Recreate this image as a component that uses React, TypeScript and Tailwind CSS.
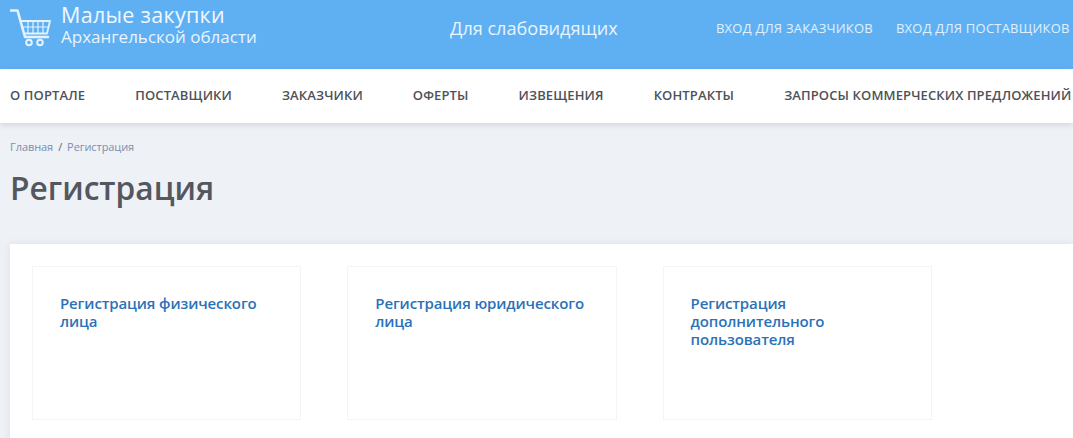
const navItems = [
	"О ПОРТАЛЕ",
	"ПОСТАВЩИКИ",
	"ЗАКАЗЧИКИ",
	"ОФЕРТЫ",
	"ИЗВЕЩЕНИЯ",
	"КОНТРАКТЫ",
	"ЗАПРОСЫ КОММЕРЧЕСКИХ ПРЕДЛОЖЕНИЙ",
];

const cards = [
	"Регистрация физического лица",
	"Регистрация юридического лица",
	"Регистрация дополнительного пользователя",
];

function CartIcon() {
	return (
		<svg width="41" height="38" viewBox="0 0 41 38" fill="none" stroke="#e4f2fe" className="mt-[5px] shrink-0">
			<path d="M1 1.5 H7.5 L15 28 H38" strokeWidth="2.6" strokeLinecap="round" strokeLinejoin="round" />
			<path d="M10.5 12 H40 L37 24.5 H14" strokeWidth="1.8" strokeLinejoin="round" />
			<path d="M18 12 V24 M23 12 V24 M28 12 V24 M33 12 V24 M12 18 H39" strokeWidth="1.2" />
			<circle cx="19" cy="33.5" r="2.8" strokeWidth="2" />
			<circle cx="30" cy="33.5" r="2.8" strokeWidth="2" />
		</svg>
	);
}

export default function App() {
	return (
		<div className="h-[438px] w-[1073px] overflow-hidden bg-[#eef1f6] font-['Open_Sans','Noto_Sans',sans-serif]">
			<header className="flex h-[69px] items-center bg-[#5fb0f3] text-white">
				<div className="flex w-[420px] items-start self-start pl-[10px] pt-[4px]">
					<CartIcon />
					<div className="ml-[10px]">
						<div className="text-[21.5px] leading-[22px] tracking-[0.3px] text-[#f0f8ff]">Малые закупки</div>
						<div className="text-[17px] leading-[22px] text-[#e8f4fe]">Архангельской области</div>
					</div>
				</div>
				<div className="ml-[30px] w-[266px] pb-[12px] text-[18.1px] text-[#e8f4fe]">Для слабовидящих</div>
				<div className="whitespace-nowrap pb-[12px] text-[13px] tracking-[0.22px] text-[#e0f0fd]">
					<span>ВХОД ДЛЯ ЗАКАЗЧИКОВ</span>
					<span className="ml-[23px]">ВХОД ДЛЯ ПОСТАВЩИКОВ</span>
				</div>
			</header>
			<nav className="relative flex h-[54px] items-center gap-[50px] whitespace-nowrap bg-white pl-[10px] text-[13px] font-semibold tracking-[0.13px] text-[#4d5259] shadow-[0_2px_6px_rgba(0,0,0,0.12)]">
				{navItems.map((item) => (
					<span key={item}>{item}</span>
				))}
			</nav>
			<main className="px-[10px]">
				<div className="mt-[16px] text-[11px] leading-[15px] tracking-[-0.07px] text-[#7c8db0]">
					<span>Главная</span>
					<span className="mx-[5px] text-[#5c6470]">/</span>
					<span>Регистрация</span>
				</div>
				<h1 className="mt-[12px] text-[31.7px] font-semibold leading-[44px] text-[#53575e]">Регистрация</h1>
				<section className="mt-[34px] flex h-[220px] w-[1063px] gap-[46px] bg-white px-[22px] pt-[22px] shadow-[0_0_8px_rgba(0,0,0,0.08)]">
					{cards.map((card) => (
						<div key={card} className="h-[154px] w-[269.3px] border border-[#f3f4f6] px-[27px] py-[27px] text-[15px] font-semibold leading-[18px] tracking-[-0.12px] text-[#2a72b8]">
							{card}
						</div>
					))}
				</section>
			</main>
		</div>
	);
}
